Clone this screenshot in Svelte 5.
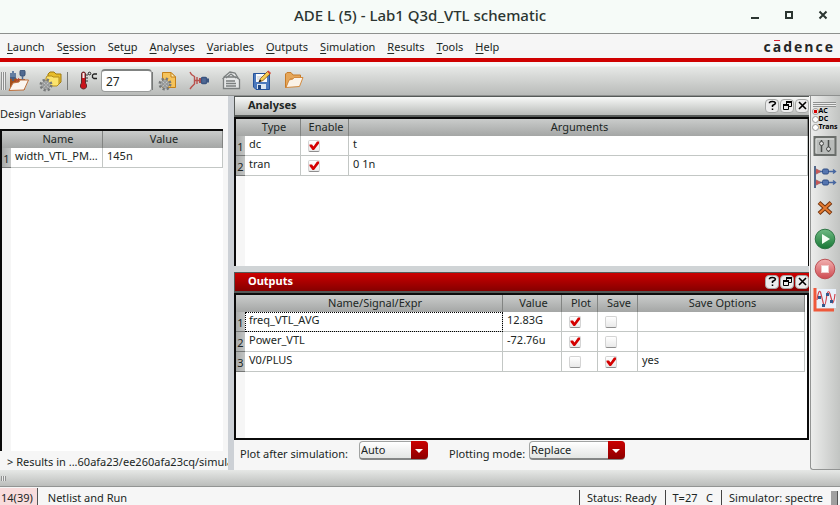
<script>
  const menus = [
    ['', 'L', 'aunch'],
    ['S', 'e', 'ssion'],
    ['Set', 'u', 'p'],
    ['', 'A', 'nalyses'],
    ['', 'V', 'ariables'],
    ['', 'O', 'utputs'],
    ['', 'S', 'imulation'],
    ['', 'R', 'esults'],
    ['', 'T', 'ools'],
    ['', 'H', 'elp'],
  ];

  let temperature = $state('27');
  let analysisKind = $state('AC');
  let plotAfter = $state('Auto');
  let plotMode = $state('Replace');

  const variables = [{ name: 'width_VTL_PMOS', value: '145n' }];
  let analyses = $state([
    { type: 'dc', enable: true, args: 't' },
    { type: 'tran', enable: true, args: '0 1n' },
  ]);
  let outputs = $state([
    { name: 'freq_VTL_AVG', value: '12.83G', plot: true, save: false, options: '' },
    { name: 'Power_VTL', value: '-72.76u', plot: true, save: false, options: '' },
    { name: 'V0/PLUS', value: '', plot: false, save: true, options: 'yes' },
  ]);
</script>

{#snippet gear()}
  <g fill="none" stroke="#77797a">
    <circle cx="8" cy="14" r="5.2" stroke-width="2.6" stroke-dasharray="2.2 1.9" />
    <circle cx="8" cy="14" r="3.4" fill="#c9cbcb" stroke-width="2" />
    <circle cx="8" cy="14" r="3.4" stroke="#b9bbbb" stroke-width="1" />
    <circle cx="8" cy="14" r="1.3" fill="#f2f2f2" stroke-width="1" />
  </g>
{/snippet}

{#snippet dockButtons()}
  <div class="dock-buttons">
    <button aria-label="Help on this pane">
      <svg width="11" height="11" viewBox="0 0 11 11" fill="none" stroke="#000" stroke-width="1.5"><path d="M2.5 3.2V2.5Q3 1.5 5.5 1.5T8.5 3Q8.500 4.2 5.500 5.500V7M5.500 8.400V10" /></svg>
    </button>
    <button aria-label="Float pane">
      <svg width="11" height="11" viewBox="0 0 11 11" fill="none" stroke="#000"><path d="M4.500 4V1.500H9.500V6.500H7M1.500 4.500H6.500V9.500H1.500Z" /><path d="M4 2H10M1 5H7" stroke-width="2" /></svg>
    </button>
    <button aria-label="Close pane">
      <svg width="11" height="11" viewBox="0 0 11 11" stroke="#000" stroke-width="1.600"><path d="M2 2L9 9M9 2L2 9" /></svg>
    </button>
  </div>
{/snippet}

<div class="window">
  <header class="titlebar">
    <h1>ADE L (5) - Lab1 Q3d_VTL schematic</h1>
    <div class="window-buttons">
      <button aria-label="Minimize"><svg width="10" height="10" viewBox="0 0 10 10"><path d="M1 8H9" stroke="#2b3531" stroke-width="2" /></svg></button>
      <button aria-label="Maximize"><svg width="10" height="10" viewBox="0 0 10 10"><path d="M2 2H8V8H2Z" fill="none" stroke="#2b3531" stroke-width="2" /></svg></button>
      <button aria-label="Close"><svg width="10" height="10" viewBox="0 0 10 10"><path d="M1.5 1.5L8.5 8.5M8.5 1.5L1.5 8.5" stroke="#2b3531" stroke-width="2" /></svg></button>
    </div>
  </header>

  <nav class="menubar">
    {#each menus as [before, key, after]}
      <button>{before}<u>{key}</u>{after}</button>
    {/each}
    <span class="brand">c<span class="macron">a</span>dence</span>
  </nav>

  <div class="toolbar">
    <span class="grip"></span>
    <button aria-label="Open results">
      <svg width="22" height="22" viewBox="0 0 22 22">
        <path d="M2 7H7L9 9H17V20H2Z" fill="#a5501c" />
        <path d="M5 1V11M3 3V8H7V3" fill="none" stroke="#3c5f8e" stroke-width="1.5" />
        <rect x="12" y="0" width="5" height="6" rx="1.5" fill="#506a91" stroke="#344d70" />
        <path d="M14.500 6V13" stroke="#506a91" stroke-width="1.5" />
        <path d="M11 8L8 12" stroke="#c44" stroke-width="1" />
        <path d="M1 20.500L5 13L11 12L12 10H20.500L16 20Z" fill="#fbf5f0" stroke="#bd713f" />
      </svg>
    </button>
    <button class="wide" aria-label="Setup directories">
      <svg width="24" height="22" viewBox="0 0 24 22">
        <path d="M10 4L12 2H16L18 4H23V12L20 15H10Z" fill="#e8bd2b" stroke="#a07a11" />
        <path d="M8 8L9 6H14L15 7H21V14L19 16H8Z" fill="#fbe36d" stroke="#b58d1c" />
        <g transform="translate(0 1)">{@render gear()}</g>
      </svg>
    </button>
    <span class="divider"></span>
    <label class="temperature">
      <svg width="20" height="22" viewBox="0 0 20 22" aria-label="Temperature in °C">
        <path d="M3.500 4Q3.500 2 5.500 2T7.500 4V13Q9 14.500 8.500 17Q7.500 19 5.500 19T2.500 17Q2 14.500 3.500 13Z" fill="#c8141c" stroke="#5e292b" />
        <path d="M5.500 3V8" stroke="#eee" stroke-width="2" /><path d="M8 5H10M8 8H10M8 11H10" stroke="#333" />
        <circle cx="11.500" cy="3.500" r="1.300" fill="none" stroke="#222" />
        <path d="M19 4H16L14.500 5V7.500L16 8.500H19" fill="none" stroke="#222" stroke-width="1.300" />
      </svg>
      <input type="text" bind:value={temperature} />
    </label>
    <span class="divider short"></span>
    <button aria-label="Edit model setup">
      <svg width="20" height="22" viewBox="0 0 20 22">
        <path d="M4.500 2.500H13L17.500 7V17.500H4.500Z" fill="#f5c35b" stroke="#c48018" /><path d="M13 2.500V7H17.500Z" fill="#fff0b8" stroke="#c48018" />
        <g transform="translate(-1 0)">{@render gear()}</g>
      </svg>
    </button>
    <button class="wide" aria-label="Connect">
      <svg width="22" height="22" viewBox="0 0 22 22" fill="none" stroke="#b9504c" stroke-width="1.400">
        <path d="M2 2L3.500 4.500L6.500 6.500V14L3.500 17L2 19M6.500 10.500H12M9 7V14" />
        <path d="M12 8V13" stroke-width="2" />
        <rect x="13.500" y="7.500" width="5" height="6" rx="1" fill="#4f6995" stroke="#3b5580" /><path d="M19 10.500H21" stroke="#3b5580" stroke-width="4" />
      </svg>
    </button>
    <button aria-label="Copy from cellview">
      <svg width="20" height="22" viewBox="0 0 20 22" fill="#e5e7e7" stroke="#7b7f7f" stroke-width="1.300">
        <path d="M3 7L9 2L14 3L17 8V18H3Z" /><path d="M5 8L10 4L15 8M1.500 9L4 7H15L18.500 9.500V18.500H2.500V9M5 11H14M5 13.500H15M5 16H15" />
      </svg>
    </button>
    <button class="wide" aria-label="Save state">
      <svg width="20" height="22" viewBox="0 0 20 22">
        <path d="M1.500 3.500H17.500V19.500H4L1.500 17Z" fill="#4b79bd" stroke="#25529a" />
        <rect x="4" y="4" width="11" height="8" fill="#fafafa" /><path d="M5 7H12M5 9H12" stroke="#c2c9d1" />
        <rect x="5" y="14" width="9" height="5" fill="#dce6f2" /><rect x="6" y="15" width="3" height="4" fill="#1f457f" />
        <path d="M7 12L8.500 8.500L15.500 1.500L18 4L11 10.500Z" fill="#f6cc51" stroke="#81501a" stroke-width=".8" /><path d="M15 1.500L18 4.500L19 3L16.500 .5Z" fill="#d24b3b" /><path d="M6.500 12.500L8 9.500L9.500 11Z" fill="#111" />
      </svg>
    </button>
    <button aria-label="Load state">
      <svg width="20" height="22" viewBox="0 0 20 22">
        <path d="M1.500 17.500V4L3 2.500H7L9 5H16.500V9H6L2 17.500Z" fill="#e5a659" stroke="#c77b28" />
        <path d="M2 17.500L5 10L9 9L10 7.500H19L15.500 16.500Z" fill="#fbf3e8" stroke="#d28b40" />
      </svg>
    </button>
  </div>

  <main>
    <aside class="variables">
      <h2>Design Variables</h2>
      <div class="sheet">
        <table>
          <colgroup><col class="c-num" /><col class="c-name" /><col /></colgroup>
          <thead><tr><th></th><th>Name</th><th>Value</th></tr></thead>
          <tbody>
            {#each variables as row, i}
              <tr><th>{i + 1}</th><td>{row.name}</td><td>{row.value}</td></tr>
            {/each}
          </tbody>
        </table>
      </div>
      <p class="results">&gt; Results in ...60afa23/ee260afa23cq/simula</p>
    </aside>

    <div class="panes">
      <section class="pane analyses">
        <div class="pane-title"><h2>Analyses</h2>{@render dockButtons()}</div>
        <div class="sheet">
          <table>
            <colgroup><col class="c-num" /><col class="c-type" /><col class="c-enable" /><col /></colgroup>
            <thead><tr><th></th><th>Type</th><th>Enable</th><th>Arguments</th></tr></thead>
            <tbody>
              {#each analyses as row, i}
                <tr>
                  <th>{i + 1}</th>
                  <td>{row.type}</td>
                  <td class="check"><input type="checkbox" aria-label="Enable {row.type}" bind:checked={row.enable} /></td>
                  <td>{row.args}</td>
                </tr>
              {/each}
            </tbody>
          </table>
        </div>
      </section>

      <section class="pane outputs">
        <div class="pane-title active"><h2>Outputs</h2>{@render dockButtons()}</div>
        <div class="sheet">
          <table>
            <colgroup><col class="c-num" /><col /><col class="c-value" /><col class="c-plot" /><col class="c-save" /><col class="c-options" /></colgroup>
            <thead><tr><th></th><th>Name/Signal/Expr</th><th>Value</th><th>Plot</th><th>Save</th><th>Save Options</th></tr></thead>
            <tbody>
              {#each outputs as row, i}
                <tr>
                  <th>{i + 1}</th>
                  <td class:current={i === 0}>{row.name}</td>
                  <td>{row.value}</td>
                  <td class="check"><input type="checkbox" aria-label="Plot {row.name}" bind:checked={row.plot} /></td>
                  <td class="check"><input type="checkbox" aria-label="Save {row.name}" bind:checked={row.save} /></td>
                  <td>{row.options}</td>
                </tr>
              {/each}
            </tbody>
          </table>
        </div>
      </section>

      <div class="plot-options">
        <label for="plot-after">Plot after simulation:</label>
        <span class="combo">
          <select id="plot-after" bind:value={plotAfter}><option>Auto</option><option>Refresh</option><option>None</option></select>
        </span>
        <label for="plot-mode" class="second">Plotting mode:</label>
        <span class="combo large">
          <select id="plot-mode" bind:value={plotMode}><option>Replace</option><option>Append</option></select>
        </span>
      </div>
    </div>

    <div class="sidebar">
      <span class="grip flat"></span>
      <fieldset aria-label="Choose analyses">
        {#each ['AC', 'DC', 'Trans'] as kind}
          <label><input type="radio" name="kind" value={kind} bind:group={analysisKind} />{kind}</label>
        {/each}
      </fieldset>
      <button aria-label="Edit variables">
        <svg width="24" height="22" viewBox="0 0 24 22">
          <rect x="1.500" y="2" width="21" height="18" fill="#b9bcba" stroke="#6a6e6b" stroke-width="2" />
          <path d="M3 18V4H21" fill="none" stroke="#dfe1df" />
          <path d="M8.500 5V17M15.500 5V17" stroke="#4a4d4b" stroke-width="1.500" />
          <circle cx="8.500" cy="8.500" r="2" fill="#ddd" stroke="#4a4d4b" /><circle cx="15.500" cy="14" r="2" fill="#ddd" stroke="#4a4d4b" />
        </svg>
      </button>
      <button aria-label="Setup outputs">
        <svg width="24" height="24" viewBox="0 0 24 24">
          <path d="M2 1V23" stroke="#53688b" stroke-width="2" />
          {#each [6.5, 17.5] as y}
            <path d="M3 {y - 2.5}L8 {y}L3 {y + 2.5}" fill="#c55" stroke="#a66" />
            <path d="M7 {y}H22.500M20 {y - 2}L22.500 {y}L20 {y + 2}" fill="none" stroke="#4666a0" stroke-width="1.400" />
            <rect x="9.500" y={y - 2.5} width="6" height="5" rx="1.500" fill="#5475b0" stroke="#314f85" />
          {/each}
        </svg>
      </button>
      <button class="delete" aria-label="Delete">
        <svg width="16" height="16" viewBox="0 0 16 16"><path d="M2 2.500L14 13.500M14 2.500L2 13.500" stroke="#73350f" stroke-width="4" /><path d="M2.500 3L13.500 13M13.500 3L2.500 13" stroke="#e67b31" stroke-width="2" /></svg>
      </button>
      <button aria-label="Netlist and run">
        <svg width="22" height="22" viewBox="0 0 22 22"><defs><linearGradient id="go" x2="0" y2="1"><stop stop-color="#6fbb83" /><stop offset="1" stop-color="#177735" /></linearGradient></defs><circle cx="11" cy="11" r="9.800" fill="url(#go)" stroke="#2d7645" /><path d="M8 6L16 11L8 16Z" fill="#f4fff4" /></svg>
      </button>
      <button aria-label="Stop">
        <svg width="22" height="22" viewBox="0 0 22 22"><defs><linearGradient id="halt" x2="0" y2="1"><stop stop-color="#f2b1b1" /><stop offset="1" stop-color="#ce4a50" /></linearGradient></defs><circle cx="11" cy="11" r="9.800" fill="url(#halt)" stroke="#bc5054" /><rect x="7.500" y="7.500" width="7" height="7" fill="#fff" stroke="#efc9c9" /></svg>
      </button>
      <button aria-label="Plot outputs">
        <svg width="24" height="24" viewBox="0 0 24 24"><rect x="3" y="1" width="20" height="19" fill="#e9f1fb" /><path d="M2 0V22H21" fill="none" stroke="#ef593b" stroke-width="3" /><path d="M4 12Q5.500 1 7.500 4L11 18Q12.500 18 14 6Q15.500 1 17 6L19.500 15Q21 15 22 6" fill="none" stroke="#d2454c" stroke-width="1.200" /><path d="M5 8H8V11H5ZM9 16H12V19H9ZM13 5H16V8H13ZM17 12H20V15H17Z" fill="#33588c" /></svg>
      </button>
    </div>
  </main>

  <div class="strip"><span class="grip small"></span></div>

  <footer>
    <span class="counter">14(39)</span>
    <span class="message">Netlist and Run</span>
    <span class="cell">Status: Ready</span>
    <span class="cell">T=27 &nbsp; C</span>
    <span class="cell">Simulator: spectre</span>
    <span class="end"></span>
  </footer>
</div>

<style>
  :global(body) {
    margin: 0;
  }
  .window,
  .window * {
    box-sizing: border-box;
  }
  .window {
    display: flex;
    flex-direction: column;
    height: 100vh;
    overflow: hidden;
    background: #f6f6f6;
    color: #202624;
    font: 11px/16px 'Noto Sans', 'Open Sans', sans-serif;
  }
  h1,
  h2,
  p {
    margin: 0;
    font: inherit;
  }
  button {
    display: flex;
    align-items: center;
    justify-content: center;
    padding: 0;
    border: 0;
    background: none;
    color: inherit;
    font: inherit;
  }
  svg {
    display: block;
    flex: none;
  }

  .titlebar {
    display: grid;
    grid-template-columns: 1fr auto 1fr;
    align-items: center;
    flex: none;
    height: 34px;
    padding-bottom: 3px;
    border-bottom: 1px solid #8d908e;
    background: #f6fbf8;
    color: #2b3531;
  }
  h1 {
    grid-column: 2;
    font-size: 15px;
    line-height: 20px;
    font-weight: 500;
  }
  .window-buttons {
    display: flex;
    justify-content: flex-end;
    gap: 24px;
    padding-right: 12px;
  }

  .menubar {
    display: flex;
    align-items: center;
    flex: none;
    gap: 12px;
    height: 28px;
    padding: 2px 5px 0 7px;
    border-bottom: 4px solid #cf0000;
  }
  .menubar button {
    display: block;
  }
  u {
    text-underline-offset: 2px;
  }
  .brand {
    margin-left: auto;
    color: #262626;
    font: 700 14px/20px 'Open Sans', sans-serif;
    letter-spacing: 2px;
  }
  .macron {
    position: relative;
  }
  .macron::before {
    content: '';
    position: absolute;
    top: 3px;
    left: 1px;
    width: 6px;
    height: 1px;
    background: #e02030;
  }

  .toolbar {
    display: flex;
    align-items: center;
    flex: none;
    gap: 10px;
    height: 34px;
    padding: 4px 0 0 1px;
    border-bottom: 1px solid #8e908f;
    background: linear-gradient(#f6f6f6 4px, #e6e8e6 5px, #b9bbb9);
  }
  .toolbar button {
    width: 21px;
  }
  .toolbar .wide {
    width: 22px;
  }
  .grip {
    width: 5px;
    height: 18px;
    margin-right: -8px;
    background: repeating-linear-gradient(90deg, #8f9190 0 1px, #ececec 1px 2px);
  }
  .divider {
    width: 1px;
    height: 18px;
    margin-left: -4px;
    background: #777978;
  }
  .divider.short {
    margin: 0 -6px 0 -10px;
  }
  .temperature {
    display: flex;
    align-items: center;
    gap: 3px;
  }
  .temperature input {
    width: 51px;
    height: 23px;
    padding: 0 4px;
    border: 1px solid #9a9c9b;
    border-top: 2px solid #808281;
    border-radius: 4px;
    background: #fff;
    color: #202624;
    font: inherit;
    font-size: 12px;
  }

  main {
    display: grid;
    grid-template-columns: 234px minmax(0, 1fr) 30px;
    flex: 1;
    min-height: 0;
  }
  .variables {
    display: flex;
    flex-direction: column;
    min-width: 0;
    padding-top: 10px;
    border-right: 6px solid #cdd1d6;
  }
  .variables .sheet {
    margin: 7px 5px 0 0;
    border-right: 0;
    border-bottom: 0;
  }
  .results {
    padding: 3px 0 0 7px;
    height: 19px;
    overflow: hidden;
    line-height: 16px;
    white-space: nowrap;
  }

  .sheet {
    flex: 1;
    min-height: 0;
    border: 2px solid #0b0b0b;
    border-width: 2px 1px 2px 2px;
    background: linear-gradient(90deg, #f6f6f6 9px, #fff 9px);
  }
  table {
    width: 100%;
    table-layout: fixed;
    border-spacing: 0;
  }
  .c-num {
    width: 9px;
  }
  .c-name {
    width: 92px;
  }
  .c-type {
    width: 56px;
  }
  .c-enable {
    width: 48px;
  }
  .c-value {
    width: 59px;
  }
  .c-plot {
    width: 36px;
  }
  .c-save {
    width: 40px;
  }
  .c-options {
    width: 167px;
  }
  th {
    padding: 0;
    font-weight: 400;
  }
  thead th {
    height: 17px;
    padding: 0 0 1px 3px;
    line-height: 16px;
    border-right: 1px solid #828482;
    background: linear-gradient(#cacccb, #a4a6a5);
  }
  thead th:first-child {
    padding-left: 0;
    border-right: 0;
  }
  tbody th {
    height: 20px;
    padding-top: 2px;
    border-bottom: 1px solid #757776;
    background: linear-gradient(90deg, #a9abaa, #c3c5c4);
  }
  td {
    height: 20px;
    padding: 0 3px 3px 4px;
    overflow: hidden;
    text-overflow: ellipsis;
    white-space: nowrap;
    border-right: 1px solid #c3c7c5;
    border-bottom: 1px solid #c3c7c5;
    background: #fff;
  }
  .check {
    padding: 0 0 0 7px;
  }
  .current {
    outline: 1px dotted #000;
    outline-offset: -1px;
  }
  input[type='checkbox'] {
    appearance: none;
    display: block;
    width: 12px;
    height: 12px;
    margin: 0;
    border: 1px solid #d4d4d4;
    border-bottom-color: #8e8e8e;
    border-radius: 2px;
    background: linear-gradient(#fff, #e9e9e9);
  }
  input[type='checkbox']:checked::before {
    content: '';
    display: block;
    width: 10px;
    height: 10px;
    background: #d40000;
    clip-path: polygon(5% 40%, 30% 40%, 45% 60%, 80% 10%, 100% 10%, 100% 30%, 50% 95%, 35% 95%, 5% 55%);
  }

  .panes {
    display: flex;
    flex-direction: column;
    min-width: 0;
    padding-right: 1px;
  }
  .pane {
    display: flex;
    flex-direction: column;
    min-height: 0;
  }
  .analyses {
    flex: 170;
    border-bottom: 6px solid #d0d4d6;
  }
  .analyses .sheet {
    border-bottom: 0;
  }
  .outputs {
    flex: 168;
  }
  .outputs .sheet {
    padding-right: 2px;
    border-right-width: 2px;
  }
  .pane-title {
    display: flex;
    align-items: center;
    justify-content: space-between;
    flex: none;
    height: 21px;
    padding: 0 0 1px 13px;
    border-top: 1px solid #555957;
    border-bottom: 2px solid #555957;
    border-left: 1px solid #555957;
    background: linear-gradient(#f8f9f8, #b9bbb9);
    font-weight: 700;
  }
  .pane-title h2 {
    padding-bottom: 1px;
  }
  .pane-title.active {
    background: linear-gradient(#cc0000, #850000);
    color: #fff;
  }
  .dock-buttons {
    display: flex;
    gap: 1px;
  }
  .dock-buttons button {
    width: 14px;
    height: 14px;
    border: 1px solid #a4a6a5;
    border-radius: 4px;
    background: #ececec;
  }

  .plot-options {
    display: flex;
    flex: none;
    height: 30px;
    padding: 1px 0 0 6px;
  }
  .plot-options label {
    width: 119px;
    padding-top: 5px;
    white-space: nowrap;
  }
  .plot-options .second {
    width: 80px;
    margin-left: 21px;
  }
  .combo {
    position: relative;
    display: block;
    width: 69px;
    height: 19px;
  }
  .combo.large {
    width: 96px;
  }
  .combo select {
    appearance: none;
    display: block;
    width: 100%;
    height: 19px;
    padding: 0 18px 1px 1px;
    border: 1px solid #a1a3a2;
    border-bottom: 2px solid #858786;
    border-radius: 4px;
    background: linear-gradient(#fff, #e4e6e4);
    color: inherit;
    font: inherit;
  }
  .combo::before {
    content: '';
    position: absolute;
    top: 0;
    right: 0;
    width: 17px;
    height: 18px;
    border-radius: 0 4px 4px 0;
    background: linear-gradient(#cb0000, #8d0000);
    pointer-events: none;
  }
  .combo::after {
    content: '';
    position: absolute;
    top: 8px;
    right: 5px;
    border: 4px solid transparent;
    border-top-color: #fff;
    border-bottom: 0;
    pointer-events: none;
  }

  .sidebar {
    display: flex;
    flex-direction: column;
    align-items: center;
    gap: 8px;
    min-width: 0;
    padding: 6px 2px 0 0;
    border: 1px solid #929493;
    border-width: 0 0 1px 1px;
    border-radius: 0 0 0 3px;
    background: linear-gradient(90deg, #ecedec, #c2c4c2);
  }
  .delete {
    margin: 3px 0 4px;
  }
  .grip.flat {
    flex: none;
    width: 23px;
    height: 5px;
    margin: 0;
    background: repeating-linear-gradient(#8f9190 0 1px, #ececec 1px 2px);
  }
  fieldset {
    width: 25px;
    margin: -8px 0 -4px;
    padding: 0;
    border: 0;
  }
  fieldset label {
    display: flex;
    align-items: center;
    height: 8px;
    color: #000;
    font-size: 7px;
    line-height: 8px;
    font-weight: 700;
  }
  input[type='radio'] {
    appearance: none;
    flex: none;
    width: 7px;
    height: 7px;
    margin: 0;
    border: 1px solid #969896;
    border-radius: 50%;
    background: #fff;
  }
  input[type='radio']:checked {
    background: radial-gradient(#d40000 40%, #fff 60%);
  }

  .strip {
    display: flex;
    align-items: center;
    flex: none;
    height: 17px;
    padding-left: 1px;
    border-bottom: 1px solid #929493;
    background: linear-gradient(#e6e8e6, #bbbdbb);
  }
  .grip.small {
    height: 5px;
  }

  footer {
    display: flex;
    align-items: stretch;
    flex: none;
    height: 18px;
    padding-top: 1px;
    line-height: 20px;
    white-space: nowrap;
  }
  .counter {
    padding: 0 4px 0 1px;
    border-right: 1px solid #555;
    background: #f8dcdc;
  }
  .message {
    flex: 1;
    padding-left: 10px;
  }
  .cell {
    margin-top: 2px;
    padding: 0 8px 0 7px;
    border-left: 1px solid #444;
    line-height: 16px;
  }
  .end {
    width: 7px;
    margin: 3px 2px 0 0;
    background: #a0a0a0;
    border-right: 1px solid #555;
  }
</style>
